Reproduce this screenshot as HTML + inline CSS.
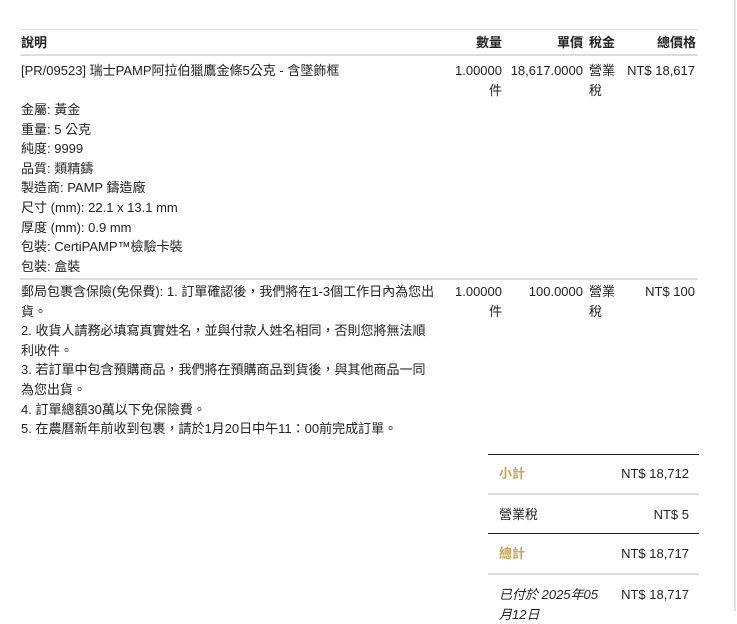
<!DOCTYPE html>
<html><head><meta charset="utf-8"><style>
html,body{margin:0;padding:0;background:#fff;}
body{width:737px;height:611px;overflow:hidden;position:relative;font-family:"Liberation Sans","Noto Sans CJK TC",sans-serif;font-size:13px;color:#222;}
.a{position:absolute;white-space:nowrap;line-height:19.6px;}
.r{text-align:right;}
.b{font-weight:bold;}
.line{position:absolute;}
.gold{color:#c9a44a;font-weight:bold;}
</style></head><body>
<div class="line" style="left:734px;top:0;width:2px;height:611px;background:#e4e4e8"></div>
<div class="line" style="left:20px;top:29px;width:678px;height:1px;background:#e2e2e6"></div>
<div class="a b" style="left:21px;top:33px">說明</div>
<div class="a b r" style="left:440px;top:33px;width:62px">數量</div>
<div class="a b r" style="left:505px;top:33px;width:78px">單價</div>
<div class="a b" style="left:589px;top:33px">稅金</div>
<div class="a b r" style="left:620px;top:33px;width:76px">總價格</div>
<div class="line" style="left:20px;top:54px;width:678px;height:2px;background:#dcdce0"></div>

<div class="a" style="left:21px;top:61px">[PR/09523] 瑞士PAMP阿拉伯獵鷹金條5公克 - 含墜飾框</div>
<div class="a r" style="left:430px;top:61px;width:72px">1.00000<br>件</div>
<div class="a r" style="left:495px;top:61px;width:88px">18,617.0000</div>
<div class="a" style="left:589px;top:61px">營業<br>稅</div>
<div class="a r" style="left:610px;top:61px;width:85px">NT$ 18,617</div>
<div class="a" style="left:21px;top:100px">金屬: 黃金<br>重量: 5 公克<br>純度: 9999<br>品質: 類精鑄<br>製造商: PAMP 鑄造廠<br>尺寸 (mm): 22.1 x 13.1 mm<br>厚度 (mm): 0.9 mm<br>包裝: CertiPAMP™檢驗卡裝<br>包裝: 盒裝</div>
<div class="line" style="left:20px;top:278px;width:678px;height:2px;background:#dcdce0"></div>

<div class="a" style="left:21px;top:282px">郵局包裹含保險(免保費): 1. 訂單確認後，我們將在1-3個工作日內為您出<br>貨。<br>2. 收貨人請務必填寫真實姓名，並與付款人姓名相同，否則您將無法順<br>利收件。<br>3. 若訂單中包含預購商品，我們將在預購商品到貨後，與其他商品一同<br>為您出貨。<br>4. 訂單總額30萬以下免保險費。<br>5. 在農曆新年前收到包裹，請於1月20日中午11：00前完成訂單。</div>
<div class="a r" style="left:430px;top:282px;width:72px">1.00000<br>件</div>
<div class="a r" style="left:495px;top:282px;width:88px">100.0000</div>
<div class="a" style="left:589px;top:282px">營業<br>稅</div>
<div class="a r" style="left:610px;top:282px;width:85px">NT$ 100</div>

<div class="line" style="left:488px;top:454px;width:211px;height:1px;background:#222"></div>
<div class="a gold" style="left:499px;top:464px">小計</div>
<div class="a r" style="left:590px;top:464px;width:99px">NT$ 18,712</div>
<div class="line" style="left:488px;top:493px;width:211px;height:2px;background:#dcdce0"></div>
<div class="a" style="left:499px;top:505px">營業稅</div>
<div class="a r" style="left:590px;top:505px;width:99px">NT$ 5</div>
<div class="line" style="left:488px;top:533px;width:211px;height:1px;background:#222"></div>
<div class="a gold" style="left:499px;top:544px">總計</div>
<div class="a r" style="left:590px;top:544px;width:99px">NT$ 18,717</div>
<div class="line" style="left:488px;top:573px;width:211px;height:2px;background:#dcdce0"></div>
<div class="a" style="left:499px;top:585px;font-style:italic">已付於 2025年05<br>月12日</div>
<div class="a r" style="left:590px;top:585px;width:99px">NT$ 18,717</div>
</body></html>
